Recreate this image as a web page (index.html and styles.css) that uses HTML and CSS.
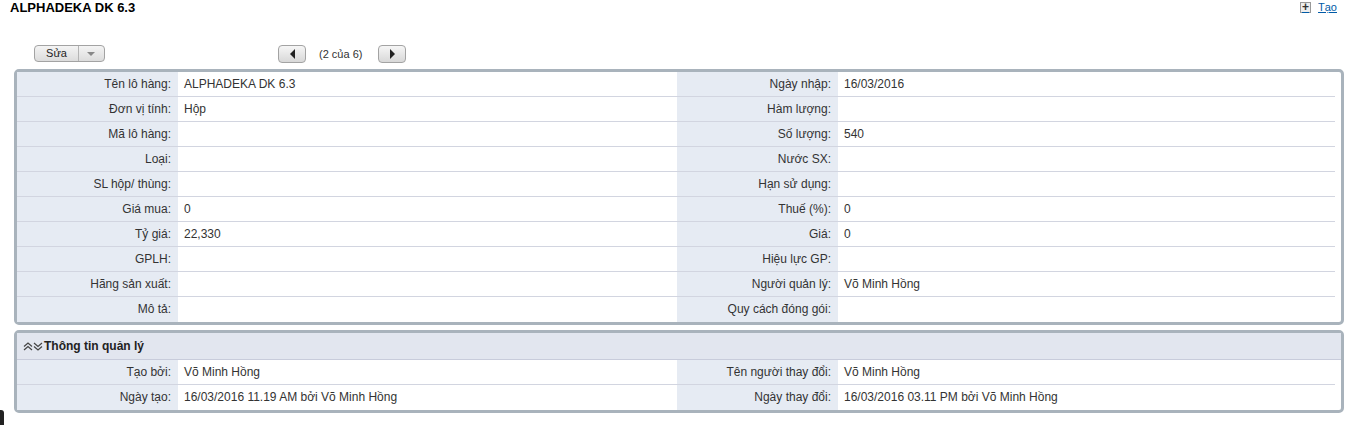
FILE: index.html
```html
<!DOCTYPE html>
<html lang="vi">
<head>
    <meta charset="UTF-8">
    <title>ALPHADEKA DK 6.3</title>
    <link rel="stylesheet" href="styles.css">
</head>
<body>

<div class="page-head">
    <h1 class="title">ALPHADEKA DK 6.3</h1>
    <a class="new-link" href="#"><span class="plus-box">+</span>Tạo</a>
</div>

<div class="toolbar">
    <div class="split-button">
        <span class="split-main">Sửa</span>
        <span class="split-arrow"></span>
    </div>
    <div class="pager">
        <span class="pager-btn"><span class="tri-left"></span></span>
        <span class="pager-text">(2 của 6)</span>
        <span class="pager-btn"><span class="tri-right"></span></span>
    </div>
</div>

<div class="panel">
    <div class="detail-grid">
        <div class="lbl">Tên lô hàng:</div><div class="val">ALPHADEKA DK 6.3</div>
        <div class="lbl">Ngày nhập:</div><div class="val">16/03/2016</div>

        <div class="lbl">Đơn vị tính:</div><div class="val">Hộp</div>
        <div class="lbl">Hàm lượng:</div><div class="val"></div>

        <div class="lbl">Mã lô hàng:</div><div class="val"></div>
        <div class="lbl">Số lượng:</div><div class="val">540</div>

        <div class="lbl">Loại:</div><div class="val"></div>
        <div class="lbl">Nước SX:</div><div class="val"></div>

        <div class="lbl">SL hộp/ thùng:</div><div class="val"></div>
        <div class="lbl">Hạn sử dụng:</div><div class="val"></div>

        <div class="lbl">Giá mua:</div><div class="val">0</div>
        <div class="lbl">Thuế (%):</div><div class="val">0</div>

        <div class="lbl">Tỷ giá:</div><div class="val">22,330</div>
        <div class="lbl">Giá:</div><div class="val">0</div>

        <div class="lbl">GPLH:</div><div class="val"></div>
        <div class="lbl">Hiệu lực GP:</div><div class="val"></div>

        <div class="lbl">Hãng sản xuất:</div><div class="val"></div>
        <div class="lbl">Người quản lý:</div><div class="val">Võ Minh Hồng</div>

        <div class="lbl last">Mô tả:</div><div class="val last"></div>
        <div class="lbl last">Quy cách đóng gói:</div><div class="val last"></div>
    </div>
</div>

<div class="panel">
    <div class="section-head">
        <span class="chevrons">
            <svg width="10" height="9" viewBox="0 0 10 9"><path d="M1 4.5L5 1L9 4.5M1 8L5 4.5L9 8" fill="none" stroke="#444" stroke-width="1.2"/></svg>
            <svg width="10" height="9" viewBox="0 0 10 9"><path d="M1 1L5 4.5L9 1M1 4.5L5 8L9 4.5" fill="none" stroke="#444" stroke-width="1.2"/></svg>
        </span>
        Thông tin quản lý
    </div>
    <div class="detail-grid">
        <div class="lbl">Tạo bởi:</div><div class="val">Võ Minh Hồng</div>
        <div class="lbl">Tên người thay đổi:</div><div class="val">Võ Minh Hồng</div>

        <div class="lbl last">Ngày tạo:</div><div class="val last">16/03/2016 11.19 AM bởi Võ Minh Hồng</div>
        <div class="lbl last">Ngày thay đổi:</div><div class="val last">16/03/2016 03.11 PM bởi Võ Minh Hồng</div>
    </div>
</div>

<div class="corner-mark"></div>

</body>
</html>
```

FILE: styles.css
```css
body {
    margin: 0;
    padding: 0 6px 0 14px;
    font-family: "Liberation Sans", Arial, sans-serif;
    font-size: 12px;
    color: #333;
    background-color: #fff;
    width: 1330px;
}

.page-head {
    display: flex;
    justify-content: space-between;
    align-items: flex-start;
    height: 38px;
    margin-left: -4px;
}

.title {
    margin: 0;
    padding-top: 1px;
    font-size: 13px;
    font-weight: bold;
    color: #000;
    line-height: 14px;
}

.new-link {
    display: flex;
    align-items: center;
    margin-top: 1px;
    margin-right: 7px;
    color: #015ba7;
    font-size: 11px;
    text-decoration: underline;
}

.plus-box {
    display: inline-block;
    width: 9px;
    height: 9px;
    line-height: 8px;
    margin-right: 7px;
    border: 1px solid #999;
    background-color: #eee;
    color: #333;
    font-size: 12px;
    font-weight: bold;
    text-align: center;
    text-decoration: none;
}

.toolbar {
    display: flex;
    align-items: center;
    height: 31px;
}

.split-button {
    display: flex;
    margin-left: 20px;
    height: 15px;
    border: 1px solid #a3a3a3;
    border-radius: 4px;
    background: linear-gradient(#f4f4f4, #dcdcdc);
    font-size: 11px;
    color: #222;
    line-height: 15px;
}

.split-main {
    width: 43px;
    text-align: center;
    border-right: 1px solid #b4b4b4;
}

.split-arrow {
    width: 25px;
    position: relative;
}

.split-arrow::after {
    content: "";
    position: absolute;
    left: 8px;
    top: 6px;
    border-left: 4px solid transparent;
    border-right: 4px solid transparent;
    border-top: 4px solid #888;
}

.pager {
    display: flex;
    align-items: center;
    margin-left: 173px;
}

.pager-btn {
    display: flex;
    align-items: center;
    justify-content: center;
    width: 26px;
    height: 16px;
    border: 1px solid #a3a3a3;
    border-radius: 4px;
    background: linear-gradient(#f6f6f6, #d8d8d8);
}

.tri-left {
    border-top: 5px solid transparent;
    border-bottom: 5px solid transparent;
    border-right: 5px solid #222;
}

.tri-right {
    border-top: 5px solid transparent;
    border-bottom: 5px solid transparent;
    border-left: 5px solid #222;
}

.pager-text {
    width: 72px;
    padding-left: 13px;
    box-sizing: border-box;
    font-size: 11px;
    color: #333;
}

.panel {
    border: 3px solid #a9b3bc;
    border-radius: 5px;
    padding-right: 6px;
    margin-bottom: 5px;
    background-color: #fff;
}

.detail-grid {
    display: grid;
    grid-template-columns: 161px 499px 161px 497px;
}

.lbl, .val {
    height: 24px;
    line-height: 24px;
    border-bottom: 1px solid #d2d5e0;
    white-space: nowrap;
    overflow: hidden;
}

.lbl {
    background-color: #e6ebf3;
    text-align: right;
    padding-right: 7px;
    color: #333;
}

.val {
    background-color: #fff;
    padding-left: 6px;
    color: #333;
}

.lbl.last, .val.last {
    border-bottom: none;
    height: 25px;
}

.section-head {
    display: flex;
    align-items: center;
    height: 26px;
    padding-left: 6px;
    margin-right: -6px;
    background-color: #e2e6ef;
    border-bottom: 1px solid #c8ccdb;
    font-weight: bold;
    color: #222;
}

.chevrons {
    display: flex;
    margin-right: 1px;
}

.corner-mark {
    position: absolute;
    left: 0;
    top: 410px;
    width: 4px;
    height: 15px;
    background-color: #222;
    border-top-right-radius: 3px;
}
```
